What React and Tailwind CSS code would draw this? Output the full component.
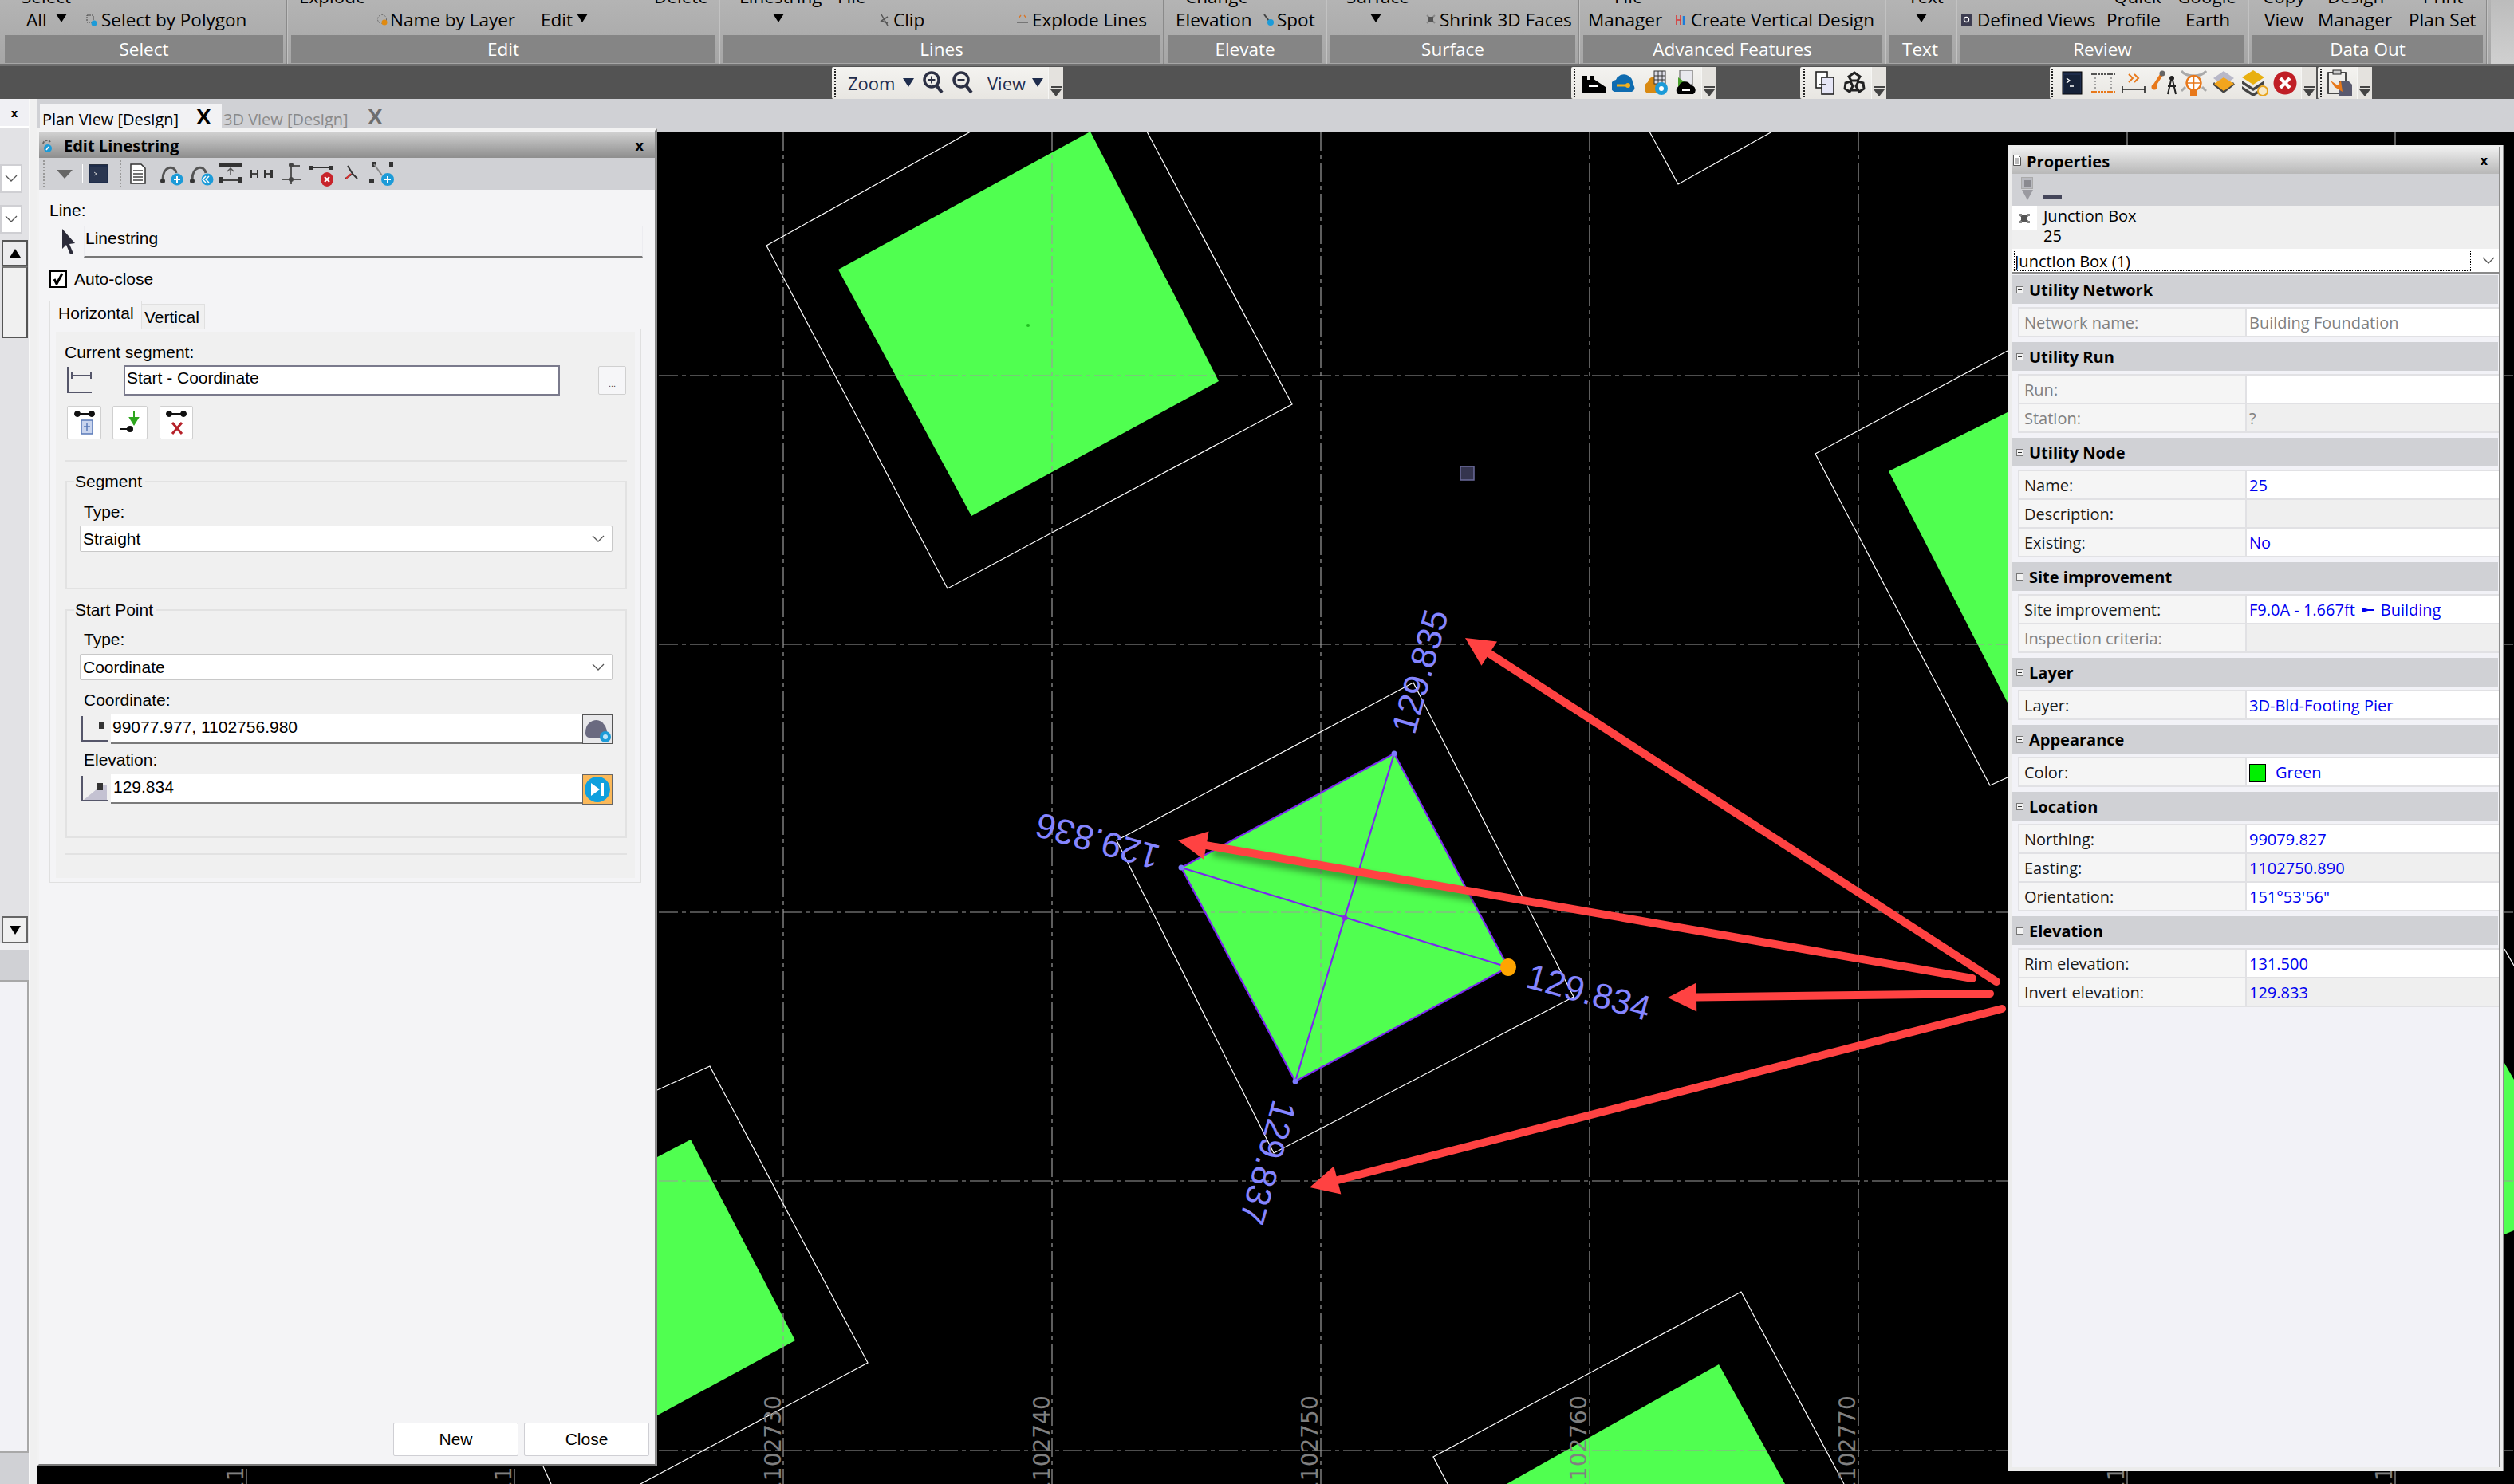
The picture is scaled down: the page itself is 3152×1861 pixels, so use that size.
import React from "react";

const Tri = ({ c = "#000", cls = "" }) => (
  <svg width="14" height="11" viewBox="0 0 14 11" className={"shrink-0 " + cls}><path d="M0 0h14L7 11z" fill={c} /></svg>
);
const Chev = ({ c = "#555" }) => (
  <svg width="16" height="10" viewBox="0 0 16 10" className="shrink-0"><path d="M1 1l7 7 7-7" stroke={c} strokeWidth="1.3" fill="none" /></svg>
);
const Ic = ({ w = 14, h = 16, children, cls = "" }) => (
  <svg width={w} height={h} viewBox={`0 0 ${w} ${h}`} className={"shrink-0 " + cls}>{children}</svg>
);
const Sep = () => (
  <div className="w-[10px] h-[80px] flex justify-center shrink-0"><div className="w-[2px] h-full bg-[#8a8a8a] border-r border-[#c2c2c2]" /></div>
);
const Strip = ({ label }) => (
  <div className="h-[35px] mt-[4px] mb-[1px] bg-[#858585] text-white flex items-center justify-center shrink-0">{label}</div>
);
const Row1 = ({ children }) => <div className="h-[18px] mb-[4px] flex items-end text-black whitespace-nowrap shrink-0 leading-none">{children}</div>;
const Row2 = ({ children }) => <div className="h-[28px] mb-[1px] flex items-center text-black whitespace-nowrap shrink-0">{children}</div>;

const Overflow = () => (
  <div className="w-[19px] h-full flex flex-col items-center justify-end pb-[3px] bg-[#e4e2de] border-l border-[#f6f6f4] shrink-0">
    <div className="w-[13px] h-[2px] bg-[#444] mb-[2px]" />
    <svg width="14" height="9" viewBox="0 0 14 9"><path d="M0 0h14L7 9z" fill="#444" /></svg>
  </div>
);
const Grip = ({ cls = "" }) => <div className={"w-[2px] h-[36px] border-l-2 border-dotted border-[#222] shrink-0 " + cls} />;

function Ribbon() {
  return (
    <div className="h-[80px] flex pl-[6px] bg-gradient-to-b from-[#b4b4b4] to-[#a6a6a6] text-[22.5px] leading-[28px] overflow-hidden shrink-0">
      <div className="w-[349px] h-[80px] flex flex-col justify-end overflow-hidden shrink-0">
        <Row1><span className="ml-[21px]">Select</span></Row1>
        <Row2>
          <span className="ml-[27px] w-[30px]">All</span>
          <Tri cls="ml-[7px] -mt-[6px]" />
          <Ic cls="ml-[24px]"><rect x="1" y="2" width="8" height="9" fill="none" stroke="#444" strokeDasharray="2 1" /><circle cx="10" cy="12" r="3.5" fill="#1c9bd8" /></Ic>
          <span className="ml-[5px] w-[188px]">Select by Polygon</span>
        </Row2>
        <Strip label="Select" />
      </div>
      <Sep />
      <div className="w-[532px] h-[80px] flex flex-col justify-end overflow-hidden shrink-0">
        <Row1><span className="ml-[10px] w-[80px]">Explode</span><span className="ml-[365px]">Delete</span></Row1>
        <Row2>
          <Ic cls="ml-[107px]"><circle cx="7" cy="7" r="5.5" fill="none" stroke="#666" strokeDasharray="2 1.5" /><circle cx="10" cy="11" r="3.5" fill="#e08a10" /></Ic>
          <span className="ml-[3px] w-[159px]">Name by Layer</span>
          <span className="ml-[30px] w-[40px]">Edit</span>
          <Tri cls="ml-[5px] -mt-[6px]" />
        </Row2>
        <Strip label="Edit" />
      </div>
      <Sep />
      <div className="w-[547px] h-[80px] flex flex-col justify-end overflow-hidden shrink-0">
        <Row1><span className="ml-[20px] w-[101px]">Linestring</span><span className="ml-[22px]">File</span></Row1>
        <Row2>
          <Tri cls="ml-[62px] -mt-[6px]" />
          <Ic cls="ml-[119px]"><path d="M3 1l8 14M11 4L3 9l8 3" stroke="#555" strokeWidth="1.5" fill="none" /></Ic>
          <span className="ml-[4px] w-[40px]">Clip</span>
          <Ic w={16} cls="ml-[114px]"><path d="M3 6l3-4M13 6l-3-4" stroke="#d9772a" strokeWidth="1.3" fill="none" /><path d="M1 11h14" stroke="#555" strokeWidth="1.3" /></Ic>
          <span className="ml-[4px] w-[144px]">Explode Lines</span>
        </Row2>
        <Strip label="Lines" />
      </div>
      <Sep />
      <div className="w-[194px] h-[80px] flex flex-col justify-end overflow-hidden shrink-0">
        <Row1><span className="ml-[22px]">Change</span></Row1>
        <Row2>
          <span className="ml-[10px] w-[95px]">Elevation</span>
          <Ic cls="ml-[14px]"><path d="M2 1l6 8" stroke="#444" strokeWidth="2" /><circle cx="10" cy="11" r="4" fill="#1c9bd8" /></Ic>
          <span className="ml-[4px] w-[49px]">Spot</span>
        </Row2>
        <Strip label="Elevate" />
      </div>
      <Sep />
      <div className="w-[307px] h-[80px] flex flex-col justify-end overflow-hidden shrink-0">
        <Row1><span className="ml-[20px]">Surface</span></Row1>
        <Row2>
          <Tri cls="ml-[50px] -mt-[6px]" />
          <Ic cls="ml-[55px]"><path d="M2 2l10 10M12 2L2 12" stroke="#888" strokeWidth="2" /><rect x="4" y="4" width="6" height="6" fill="#555" /></Ic>
          <span className="ml-[4px] w-[168px]">Shrink 3D Faces</span>
        </Row2>
        <Strip label="Surface" />
      </div>
      <Sep />
      <div className="w-[374px] h-[80px] flex flex-col justify-end overflow-hidden shrink-0">
        <Row1><span className="ml-[39px]">File</span></Row1>
        <Row2>
          <span className="ml-[6px] w-[95px]">Manager</span>
          <Ic w={16} cls="ml-[14px]"><path d="M2 2v12M7 2v12M2 8h5" stroke="#d33" strokeWidth="1.6" /><path d="M11 3v11" stroke="#1c7bd8" strokeWidth="2.5" /></Ic>
          <span className="ml-[4px] w-[234px]">Create Vertical Design</span>
        </Row2>
        <Strip label="Advanced Features" />
      </div>
      <Sep />
      <div className="w-[79px] h-[80px] flex flex-col justify-end overflow-hidden shrink-0">
        <Row1><span className="ml-[23px]">Text</span></Row1>
        <Row2><Tri cls="ml-[33px] -mt-[6px]" /></Row2>
        <div className="-ml-[2px]"><Strip label="Text" /></div>
      </div>
      <Sep />
      <div className="w-[356px] h-[80px] flex flex-col justify-end overflow-hidden shrink-0">
        <Row1><span className="ml-[192px] w-[57px]">Quick</span><span className="ml-[23px]">Google</span></Row1>
        <Row2>
          <Ic cls="ml-[1px]"><rect width="13" height="15" fill="#3c3c50" /><circle cx="6.5" cy="7.5" r="3" fill="none" stroke="#fff" strokeWidth="1.4" /></Ic>
          <span className="ml-[6px] w-[150px]">Defined Views</span>
          <span className="ml-[12px] w-[66px]">Profile</span>
          <span className="ml-[33px]">Earth</span>
        </Row2>
        <Strip label="Review" />
      </div>
      <Sep />
      <div className="w-[289px] h-[80px] flex flex-col justify-end overflow-hidden shrink-0">
        <Row1><span className="ml-[13px] w-[47px]">Copy</span><span className="ml-[34px] w-[70px]">Design</span><span className="ml-[50px]">Print</span></Row1>
        <Row2>
          <span className="ml-[15px] w-[50px]">View</span>
          <span className="ml-[17px] w-[94px]">Manager</span>
          <span className="ml-[20px]">Plan Set</span>
        </Row2>
        <Strip label="Data Out" />
      </div>
      <Sep />
      <div className="flex-1 h-[80px] bg-gradient-to-b from-[#bcbcbc] to-[#d0d0d0]" />
    </div>
  );
}

const TB = ({ cls, children }) => (
  <div className={"h-[40px] mt-[1px] flex items-center bg-gradient-to-b from-[#f4f3f0] to-[#e8e6e2] rounded-[2px] shrink-0 " + cls}>{children}</div>
);

function Toolbars() {
  return (
    <div className="h-[44px] flex bg-[#535353] border-t-[3px] border-[#6f6f6f] shrink-0">
      <TB cls="ml-[1043px] w-[290px] text-[22px] text-[#1f2d4d]">
        <Grip cls="ml-[3px]" />
        <span className="ml-[15px] w-[63px]">Zoom</span>
        <Tri c="#1f2d4d" cls="ml-[6px] -mt-[2px]" />
        <svg width="26" height="30" viewBox="0 0 26 30" className="ml-[11px]"><circle cx="11" cy="11" r="9" fill="none" stroke="#2c3044" strokeWidth="3.5" /><path d="M17 18l7 9" stroke="#2c3044" strokeWidth="4" /><path d="M6.5 11h9M11 6.500v9" stroke="#2c3044" strokeWidth="2" /></svg>
        <svg width="26" height="30" viewBox="0 0 26 30" className="ml-[11px]"><circle cx="11" cy="11" r="9" fill="none" stroke="#2c3044" strokeWidth="3.5" /><path d="M17 18l7 9" stroke="#2c3044" strokeWidth="4" /><path d="M6.5 11h9" stroke="#2c3044" strokeWidth="2" /></svg>
        <span className="ml-[18px] w-[52px]">View</span>
        <Tri c="#1f2d4d" cls="ml-[4px] -mt-[2px]" />
        <div className="ml-auto h-full"><Overflow /></div>
      </TB>
      <TB cls="ml-[637px] w-[182px]">
        <Grip cls="ml-[3px]" />
        <svg width="32" height="30" viewBox="0 0 32 30" className="ml-[8px]"><path d="M1 6h6v5h3V6h5v4l15 10v8H1z" fill="#000" /><path d="M9 19h12" stroke="#fff" strokeWidth="2" /></svg>
        <svg width="30" height="30" viewBox="0 0 30 30" className="ml-[6px]"><path d="M3 26a8 8 0 0 1 2-15 11 11 0 0 1 21 6 5 5 0 0 1-1 9z" fill="#0f6cb0" /><path d="M6 18h14" stroke="#f2b01e" strokeWidth="3" /><circle cx="20" cy="18" r="3" fill="#f2b01e" /></svg>
        <svg width="30" height="32" viewBox="0 0 30 32" className="ml-[12px]"><path d="M1 28a8 8 0 0 1 2-13 8 8 0 0 1 13-5l5 18z" fill="#d98a12" /><rect x="11" y="1" width="14" height="16" fill="#dcdce6" stroke="#333" /><path d="M11 7h14M11 12h14M16 1v16M21 1v16" stroke="#333" /><circle cx="20" cy="23" r="8" fill="#1c9bd8" /><circle cx="20" cy="23" r="3" fill="#fff" /></svg>
        <svg width="28" height="32" viewBox="0 0 28 32" className="ml-[8px]"><rect x="5" y="0" width="16" height="18" fill="#e8e8ee" stroke="#555" /><path d="M3 9l10 7-10 7z" fill="#4aa02c" /><path d="M3 30a6 6 0 0 1 1-10 8 8 0 0 1 15-1 6 6 0 0 1 3 11z" fill="#000" /><path d="M8 25h10" stroke="#fff" strokeWidth="2" /></svg>
        <div className="ml-auto h-full"><Overflow /></div>
      </TB>
      <TB cls="ml-[105px] w-[108px]">
        <Grip cls="ml-[4px]" />
        <svg width="26" height="30" viewBox="0 0 26 30" className="ml-[12px]"><rect x="2" y="1" width="14" height="20" fill="#fff" stroke="#222" strokeWidth="1.6" /><rect x="9" y="8" width="15" height="21" fill="#e6e6f6" stroke="#222" strokeWidth="1.6" /><path d="M6 17h9" stroke="#222" strokeWidth="1.6" /></svg>
        <svg width="28" height="30" viewBox="0 0 28 30" className="ml-[10px]"><path d="M14 2l7 5-3 5h-8L7 7zM3 15l6-2 3 6-4 7-6-4zM25 15l-6-2-3 6 4 7 6-4zM10 24h8" fill="none" stroke="#222" strokeWidth="3" /></svg>
        <div className="ml-auto h-full"><Overflow /></div>
      </TB>
      <TB cls="ml-[205px] w-[334px]">
        <Grip cls="ml-[2px]" />
        <svg width="26" height="30" viewBox="0 0 26 30" className="ml-[11px]"><rect x="1" y="1" width="24" height="28" fill="#1e2c4a" stroke="#000" /><rect x="3" y="5" width="20" height="22" fill="#162238" /><path d="M6 9l4 3-4 3M10 19h5" stroke="#fff" strokeWidth="1.4" fill="none" /></svg>
        <svg width="32" height="30" viewBox="0 0 32 30" className="ml-[10px]"><path d="M1 4h30" stroke="#222" strokeWidth="1.6" strokeDasharray="3 1" /><path d="M1 26h30" stroke="#e8781a" strokeWidth="2" strokeDasharray="3 1" /><path d="M6 8v14M26 8v14" stroke="#888" strokeWidth="1.5" strokeDasharray="2 2" /></svg>
        <svg width="30" height="30" viewBox="0 0 30 30" className="ml-[7px]"><path d="M9 4l5 5-5 5M16 4l5 5-5 5" stroke="#e8781a" strokeWidth="2" fill="none" /><path d="M1 23h28M1 19v8M29 19v8" stroke="#222" strokeWidth="1.6" /></svg>
        <svg width="34" height="32" viewBox="0 0 34 32" className="ml-[7px]"><path d="M3 21L14 4" stroke="#e8781a" strokeWidth="4" /><circle cx="14" cy="4" r="3.5" fill="#666" /><circle cx="4" cy="21" r="3.5" fill="#e8781a" /><path d="M26 8l-5 22M26 8l5 22M21 20h10" stroke="#222" strokeWidth="2" fill="none" /><circle cx="26" cy="10" r="3" fill="#222" /></svg>
        <svg width="33" height="32" viewBox="0 0 33 32" className="ml-[3px]"><path d="M1 1c6 8 25 8 31 0M1 26l5-5M32 26l-5-5" stroke="#aaa" strokeWidth="3" fill="none" /><circle cx="16.500" cy="16" r="9" fill="#fff" stroke="#e8781a" strokeWidth="2.5" /><path d="M16.500 7v18M8 16h17" stroke="#e8781a" strokeWidth="1.6" /><rect x="12" y="25" width="9" height="7" fill="#e8781a" /></svg>
        <svg width="31" height="32" viewBox="0 0 31 32" className="ml-[6px]"><path d="M15 1l13 9-13 9L2 10z" fill="#b8b8c8" /><path d="M3 15l12 9 12-9 2 3-14 11L1 18z" fill="#444" /><path d="M15 9l13 8-13 9L3 17z" fill="#f2a51e" /></svg>
        <svg width="33" height="34" viewBox="0 0 33 34" className="ml-[6px]"><path d="M15 1l14 9-14 9L1 10z" fill="#e8b010" /><path d="M1 14l14 9 14-9v4l-14 9-14-9zM1 21l14 9 10-6v4l-10 6-14-9z" fill="#444" /><circle cx="27" cy="27" r="6" fill="#f7e9c8" stroke="#e8a51e" strokeWidth="2" /></svg>
        <svg width="30" height="30" viewBox="0 0 30 30" className="ml-[7px]"><circle cx="15" cy="15" r="14.500" fill="#c01f26" /><path d="M9 9l12 12M21 9L9 21" stroke="#fff" strokeWidth="4.500" /></svg>
        <div className="ml-auto h-full"><Overflow /></div>
      </TB>
      <TB cls="ml-[2px] w-[68px]">
        <Grip cls="ml-[3px]" />
        <svg width="32" height="34" viewBox="0 0 32 34" className="ml-[7px]"><rect x="1" y="4" width="22" height="26" fill="none" stroke="#222" strokeWidth="1.6" /><rect x="7" y="1" width="10" height="5" fill="#ccc" stroke="#222" /><path d="M15 14h11l5 5v14H15z" fill="#5a5a6e" /><path d="M4 14l9 6 4-6 2 14-10-6z" fill="#e8781a" /></svg>
        <div className="ml-auto h-full"><Overflow /></div>
      </TB>
    </div>
  );
}

const Grip2 = ({ cls = "" }) => <div className={"w-[2px] h-[34px] border-l-2 border-dotted border-[#999] shrink-0 " + cls} />;
const Dumb = () => (
  <g fill="#111" stroke="#111"><circle cx="4" cy="5" r="3.500" /><circle cx="22" cy="5" r="3.500" /><path d="M4 5h18" strokeWidth="2" /></g>
);

function EditPanel() {
  return (
    <div className="absolute left-0 -top-[4px] bottom-[22px] w-[778px] flex flex-col bg-[#f4f4f6] border-[3px] border-b-[3px] border-[#f2f2f2] border-b-[#7a7a7a] border-r-[#8a8a8a] font-['Liberation_Sans',sans-serif] text-[21px] leading-[22px] text-black">
      <div className="h-[32px] mt-[2px] flex items-center bg-gradient-to-b from-[#d0d0d0] to-[#8e8e8e] shrink-0 font-['Open_Sans',sans-serif]">
        <svg width="16" height="18" viewBox="0 0 16 18" className="ml-[1px]"><path d="M4 7a5 5 0 0 1 9-2" stroke="#666" strokeWidth="2" fill="none" strokeDasharray="3 1.500" /><circle cx="10" cy="13" r="5" fill="#1c9bd8" /><path d="M8 15l3-4" stroke="#fff" strokeWidth="1.500" /></svg>
        <span className="ml-[14px] pt-[2px] font-bold text-[20px] w-[300px]">Edit Linestring</span>
        <span className="ml-auto mr-[14px] font-bold text-[18px] leading-none">x</span>
      </div>
      <div className="h-[40px] flex items-center bg-[#d0d1d5] shrink-0">
        <Grip2 cls="ml-[5px]" />
        <svg width="20" height="11" viewBox="0 0 20 11" className="ml-[15px]"><path d="M0 0h20L10 11z" fill="#666" /></svg>
        <div className="ml-[12px] w-[1px] h-[24px] bg-white" />
        <svg width="25" height="24" viewBox="0 0 25 24" className="ml-[7px]"><rect width="25" height="24" fill="#1e2c4a" stroke="#333" /><rect x="2" y="4" width="21" height="18" fill="#2a3650" /><path d="M7 10l3 2-3 2" stroke="#ccc" fill="none" /></svg>
        <Grip2 cls="ml-[14px]" />
        <svg width="20" height="26" viewBox="0 0 20 26" className="ml-[11px]"><path d="M1 1h13l5 5v19H1z" fill="#fff" stroke="#333" strokeWidth="1.500" /><path d="M4 9h12M4 13h12M4 17h12M4 21h12" stroke="#444" strokeWidth="1.500" /></svg>
        <svg width="28" height="30" viewBox="0 0 28 30" className="ml-[18px]"><path d="M3 22C3 5 18 3 20 14" stroke="#555" strokeWidth="3" fill="none" /><circle cx="3" cy="24" r="3" fill="#333" /><circle cx="21" cy="22" r="7.500" fill="#1c9bd8" /><path d="M21 18v8M17 22h8" stroke="#fff" strokeWidth="2" /></svg>
        <svg width="30" height="30" viewBox="0 0 30 30" className="ml-[9px]"><path d="M3 22C3 5 18 3 20 14" stroke="#555" strokeWidth="3" fill="none" /><circle cx="3" cy="24" r="3" fill="#333" /><circle cx="22" cy="22" r="7.500" fill="#1c9bd8" /><path d="M24 18l-4 4 4 4M20 18l-4 4 4 4" stroke="#fff" strokeWidth="1.500" fill="none" /></svg>
        <svg width="28" height="26" viewBox="0 0 28 26" className="ml-[7px]"><path d="M0 2h28" stroke="#333" strokeWidth="4" /><path d="M14 6v9M10 10l4-4 4 4" stroke="#555" strokeWidth="1.500" fill="none" /><path d="M2 21h24" stroke="#444" strokeWidth="2" /><rect y="17" width="5" height="8" fill="#333" /><rect x="23" y="17" width="5" height="8" fill="#333" /></svg>
        <svg width="29" height="12" viewBox="0 0 29 12" className="ml-[10px]"><path d="M0 6h10M19 6h10" stroke="#444" strokeWidth="2" /><rect x="0" y="1" width="3" height="10" fill="#333" /><rect x="9" y="1" width="2" height="10" fill="#333" /><rect x="18" y="1" width="2" height="10" fill="#333" /><rect x="26" y="1" width="3" height="10" fill="#333" /></svg>
        <svg width="26" height="30" viewBox="0 0 26 30" className="ml-[10px]"><path d="M13 2v26M1 22h25M14 5h10" stroke="#555" strokeWidth="2" /><circle cx="13" cy="4" r="3" fill="#444" /><circle cx="13" cy="22" r="3" fill="#444" /></svg>
        <svg width="31" height="32" viewBox="0 0 31 32" className="ml-[9px]"><path d="M2 8h28" stroke="#333" strokeWidth="2" /><rect x="0" y="6" width="5" height="5" fill="#333" /><rect x="25" y="6" width="5" height="5" fill="#333" /><ellipse cx="23" cy="23" rx="8" ry="9" fill="#c8242b" /><path d="M20 20l6 6M26 20l-6 6" stroke="#fff" strokeWidth="2" /></svg>
        <svg width="19" height="22" viewBox="0 0 19 22" className="ml-[12px]"><path d="M6 1l6 10 6 6M3 17l9-6" stroke="#333" strokeWidth="2" fill="none" /><path d="M4 17l6-6" stroke="#d33" strokeWidth="2" /></svg>
        <svg width="31" height="32" viewBox="0 0 31 32" className="ml-[14px]"><rect x="3" y="1" width="6" height="6" fill="#333" /><rect x="25" y="1" width="5" height="6" fill="#333" /><rect x="0" y="22" width="6" height="6" fill="#333" /><path d="M6 4l10 14" stroke="#888" strokeWidth="2" /><circle cx="23" cy="23" r="8" fill="#1c9bd8" /><path d="M23 19v8M19 23h8" stroke="#fff" strokeWidth="2" /></svg>
      </div>
      <div className="flex-1 flex flex-col pl-[13px] min-h-0">
        <div className="h-[22px] mt-[15px]">Line:</div>
        <div className="flex mt-[8px] h-[40px]">
          <svg width="17" height="32" viewBox="0 0 17 32" className="ml-[15px] mt-[4px]"><path d="M1 0l16 18-7 1 5 12-4 1-5-12-5 5z" fill="#2c2c3a" /></svg>
          <div className="ml-[11px] w-[701px] h-[40px] pl-[1px] pt-[4px] border border-[#ececf0] border-b-2 border-b-[#777]">Linestring</div>
        </div>
        <div className="flex items-center mt-[16px] h-[22px]">
          <div className="w-[22px] h-[22px] border-2 border-black bg-white flex items-center justify-center">
            <svg width="14" height="16" viewBox="0 0 14 16"><path d="M2 8l3 6 7-13" stroke="#000" strokeWidth="3" fill="none" /></svg>
          </div>
          <span className="ml-[9px]">Auto-close</span>
        </div>
        <div className="flex items-end mt-[16px] h-[35px]">
          <div className="w-[116px] h-[35px] pl-[10px] pt-[4px] bg-[#f4f4f6] border border-b-0 border-[#e0e0e0]">Horizontal</div>
          <div className="w-[79px] h-[31px] pl-[3px] pt-[5px] bg-[#f0f0f0] border border-l-0 border-b-0 border-[#e0e0e0]">Vertical</div>
        </div>
        <div className="w-[742px] h-[695px] px-[7px] pt-[3px] pb-[5px] border border-[#e0e0e0] flex">
          <div className="w-[728px] h-full bg-[#f0f0f0]">
            <div className="h-[22px] mt-[15px] pl-[11px] pt-[0px]">Current segment:</div>
            <div className="flex mt-[5px] h-[38px]">
              <svg width="32" height="34" viewBox="0 0 32 34" className="ml-[14px] mt-[2px]"><path d="M1 0v32h30" stroke="#55566a" strokeWidth="2" fill="none" /><path d="M6 11h24M6 7v8M30 7v8" stroke="#55566a" strokeWidth="2" /></svg>
              <div className="ml-[39px] w-[547px] h-[38px] bg-white border-2 border-[#7a7a8c] pl-[2px] pt-[3px]">Start - Coordinate</div>
              <div className="ml-[48px] w-[35px] h-[36px] mt-[1px] bg-[#f6f6f8] border border-[#d0d0d0] rounded-[2px] flex items-center justify-center text-[11px] pt-[8px] text-[#444]">...</div>
            </div>
            <div className="flex mt-[13px] h-[42px]">
              <div className="ml-[14px] w-[43px] h-[42px] bg-white border border-[#d0d0d0] rounded-[2px] flex items-center justify-center">
                <svg width="26" height="32" viewBox="0 0 26 32" className=""><Dumb /><rect x="9" y="13" width="14" height="17" fill="#c8d4ee" stroke="#5a7ab8" strokeWidth="1.500" /><path d="M16 16v10M12 21h8" stroke="#5a7ab8" strokeWidth="1.500" /></svg>
              </div>
              <div className="ml-[14px] w-[44px] h-[42px] bg-white border border-[#d0d0d0] rounded-[2px] flex items-center justify-center">
                <svg width="26" height="32" viewBox="0 0 26 32"><path d="M1 24h12" stroke="#111" strokeWidth="2" /><circle cx="13" cy="24" r="4" fill="#111" /><path d="M18 2v10M13 10h10l-5 8z" fill="#2ea61e" stroke="#2ea61e" strokeWidth="2" /></svg>
              </div>
              <div className="ml-[15px] w-[42px] h-[42px] bg-white border border-[#d0d0d0] rounded-[2px] flex items-center justify-center">
                <svg width="26" height="32" viewBox="0 0 26 32"><Dumb /><path d="M8 16l12 14M20 16L8 30" stroke="#b6222a" strokeWidth="3" /></svg>
              </div>
            </div>
            <div className="ml-[12px] mt-[26px] w-[704px] h-[2px] bg-[#e2e2e2]" />
            <div className="relative ml-[12px] mt-[24px] w-[704px] h-[136px] border-2 border-[#e2e2e2] flex flex-col">
              <span className="absolute left-[9px] -top-[12px] bg-[#f0f0f0] pr-[4px] pl-[1px]">Segment</span>
              <div className="h-[22px] mt-[26px] pl-[21px]">Type:</div>
              <div className="ml-[16px] mt-[6px] w-[668px] h-[33px] bg-white border border-[#c8c8c8] rounded-[2px] flex items-center pl-[3px] pr-[9px] justify-between">Straight<Chev /></div>
            </div>
            <div className="relative ml-[12px] mt-[25px] w-[704px] h-[287px] border-2 border-[#e2e2e2] flex flex-col">
              <span className="absolute left-[9px] -top-[12px] bg-[#f0f0f0] pr-[4px] pl-[1px]">Start Point</span>
              <div className="h-[22px] mt-[25px] pl-[21px]">Type:</div>
              <div className="ml-[16px] mt-[7px] w-[668px] h-[33px] bg-white border border-[#c8c8c8] rounded-[2px] flex items-center pl-[3px] pr-[9px] justify-between">Coordinate<Chev /></div>
              <div className="h-[22px] mt-[14px] pl-[21px]">Coordinate:</div>
              <div className="flex mt-[7px] ml-[18px] h-[37px]">
                <svg width="33" height="34" viewBox="0 0 33 34" className=""><path d="M1 2v31h32" stroke="#55566a" strokeWidth="2" fill="none" /><rect x="22" y="9" width="6" height="9" fill="#333" /></svg>
                <div className="ml-[4px] w-[591px] h-[37px] bg-white border-b-2 border-[#7a7a7a] pl-[2px] pt-[5px]">99077.977, 1102756.980</div>
                <div className="w-[38px] h-[37px] bg-[#e8e8ea] border border-[#555]">
                  <svg width="36" height="35" viewBox="0 0 36 35"><path d="M3 22c0-11 7-16 14-16s14 9 13 18c-1 4-5 4-9 4H9c-4 0-6-2-6-6z" fill="#6a6a80" /><circle cx="28" cy="27" r="7" fill="#1c9bd8" /><circle cx="28" cy="27" r="3" fill="#bfe4f7" /></svg>
                </div>
              </div>
              <div className="h-[22px] mt-[9px] pl-[21px]">Elevation:</div>
              <div className="flex mt-[7px] ml-[18px] h-[38px]">
                <svg width="33" height="34" viewBox="0 0 33 34" className=""><path d="M1 2v31h32" stroke="#55566a" strokeWidth="2" fill="none" /><path d="M3 32l22-18h7v18z" fill="#c4c2d2" /><rect x="20" y="11" width="7" height="9" fill="#333" /></svg>
                <div className="ml-[4px] w-[591px] h-[37px] bg-white border-b-2 border-[#7a7a7a] pl-[3px] pt-[5px]">129.834</div>
                <div className="w-[38px] h-[38px] bg-[#fbb95a] border border-[#666]">
                  <svg width="36" height="36" viewBox="0 0 36 36"><circle cx="18" cy="18" r="16" fill="#0fa0de" /><path d="M10 10l11 8-11 8z" fill="#fff" /><path d="M24 10v16" stroke="#fff" strokeWidth="4" /></svg>
                </div>
              </div>
            </div>
            <div className="ml-[12px] mt-[19px] w-[704px] h-[2px] bg-[#e2e2e2]" />
          </div>
        </div>
        <div className="mt-auto mb-[10px] flex justify-end gap-[7px] pr-[7px]">
          <div className="w-[157px] h-[42px] bg-white border border-[#cfcfd4] rounded-[2px] flex items-center justify-center">New</div>
          <div className="w-[157px] h-[42px] bg-white border border-[#cfcfd4] rounded-[2px] flex items-center justify-center">Close</div>
        </div>
      </div>
    </div>
  );
}

const Head = ({ children }) => (
  <div className="h-[36px] mx-[1px] flex items-center bg-[#d0d1d5] font-bold text-black">
    <div className="ml-[5px] w-[9px] h-[9px] border border-[#777] bg-[#f2f2f2] flex items-center justify-center shrink-0"><div className="w-[5px] h-[1px] bg-[#333]" /></div>
    <span className="ml-[7px] pt-[1px]">{children}</span>
  </div>
);
const Row = ({ label, dis, alt, children }) => (
  <div className="h-[36px] flex border-b-2 border-[#e1e1e4]">
    <div className={"w-[285px] h-full flex items-center pl-[6px] pt-[2px] bg-[#f5f5f5] border-r-2 border-[#e1e1e4] " + (dis ? "text-[#808080]" : "text-[#1a1a1a]")}>{label}</div>
    <div className={"flex-1 h-full flex items-center pl-[3px] pt-[2px] " + (alt ? "bg-[#efefef] " : "bg-white ") + (dis ? "text-[#808080]" : "text-[#0000f0]")}>{children}</div>
  </div>
);
const Rows = ({ children }) => (
  <div className="mt-[4px] mb-[6px] ml-[8px] border-t-2 border-l-2 border-[#e1e1e4] flex flex-col">{children}</div>
);

function PropsPanel() {
  return (
    <div className="absolute left-[2471px] top-[17px] w-[623px] h-[1663px] flex bg-[#ececec] border-r-2 border-[#8e8e8e] pl-[5px] pr-[3px] pt-[2px] pb-[5px]">
      <div className="flex-1 min-w-0 flex flex-col bg-[#f2f2f7] border-r-2 border-[#8e8e8e] font-['Open_Sans',sans-serif] text-[20px] leading-[24px] text-black">
        <div className="h-[34px] flex items-center bg-gradient-to-b from-[#f0f0f0] to-[#b8b8b8] shrink-0">
          <svg width="10" height="14" viewBox="0 0 10 14" className="ml-[2px]"><path d="M.5.500h6l3 3v10H.5z" fill="#fff" stroke="#555" /><path d="M2 5h6M2 7h6M2 9h6M2 11h6" stroke="#777" /></svg>
          <span className="ml-[7px] pt-[3px] font-bold">Properties</span>
          <span className="ml-auto mr-[14px] font-bold text-[16px] leading-none">x</span>
        </div>
        <div className="h-[40px] flex bg-[#d0d1d5] shrink-0">
          <div className="ml-[12px] mt-[4px] flex flex-col items-center">
            <div className="w-[15px] h-[15px] bg-[#b9bac0] border border-[#aaa] flex items-center justify-center"><div className="w-[8px] h-[8px] bg-[#8a8a90]" /></div>
            <svg width="14" height="13" viewBox="0 0 14 13" className="mt-[1px]"><path d="M0 0h14L7 13z" fill="#9a9aa0" /></svg>
          </div>
          <div className="ml-[12px] mt-[27px] w-[24px] h-[4px] bg-[#44465a]" />
        </div>
        <div className="h-[54px] bg-[#efefef] flex shrink-0">
          <div className="w-[32px] h-[31px] bg-white flex items-center justify-center">
            <svg width="14" height="12" viewBox="0 0 14 12"><path d="M2 2l10 8M12 2L2 10" stroke="#666" strokeWidth="2" /><rect x="3" y="2" width="8" height="8" fill="#555" /><rect x="0" y="0" width="4" height="3" fill="#888" /><rect x="10" y="0" width="4" height="3" fill="#888" /><rect x="0" y="9" width="4" height="3" fill="#888" /><rect x="10" y="9" width="4" height="3" fill="#888" /></svg>
          </div>
          <div className="ml-[8px] flex flex-col leading-[25px]"><span>Junction Box</span><span>25</span></div>
        </div>
        <div className="h-[31px] bg-white flex items-center shrink-0 border-b-2 border-[#8a8a8a]">
          <div className="ml-[3px] w-[573px] h-[27px] border border-dotted border-black flex items-center text-[20px] pt-[2px]">Junction Box (1)</div>
          <div className="ml-[14px]"><Chev /></div>
        </div>
        <div className="flex flex-col pt-[2px]">
          <Head>Utility Network</Head>
          <Rows><Row dis label="Network name:">Building Foundation</Row></Rows>
          <Head>Utility Run</Head>
          <Rows><Row dis label="Run:"></Row><Row dis alt label="Station:">?</Row></Rows>
          <Head>Utility Node</Head>
          <Rows><Row label="Name:">25</Row><Row alt label="Description:"></Row><Row label="Existing:">No</Row></Rows>
          <Head>Site improvement</Head>
          <Rows>
            <Row label="Site improvement:"><span className="flex items-center">F9.0A - 1.667ft<svg width="16" height="8" viewBox="0 0 16 8" className="mx-[8px]"><path d="M0 1l8 2h7v2H8l-8 2z" fill="#0000f0" /></svg>Building</span></Row>
            <Row dis alt label="Inspection criteria:"></Row>
          </Rows>
          <Head>Layer</Head>
          <Rows><Row label="Layer:">3D-Bld-Footing Pier</Row></Rows>
          <Head>Appearance</Head>
          <Rows><Row label="Color:"><span className="flex items-center"><span className="w-[21px] h-[23px] bg-[#00f000] border border-black mr-[12px]" />Green</span></Row></Rows>
          <Head>Location</Head>
          <Rows><Row label="Northing:">99079.827</Row><Row alt label="Easting:">1102750.890</Row><Row label="Orientation:">151°53'56"</Row></Rows>
          <Head>Elevation</Head>
          <Rows><Row label="Rim elevation:">131.500</Row><Row alt label="Invert elevation:">129.833</Row></Rows>
        </div>
      </div>
    </div>
  );
}

const Arrow = ({ x1, y1, x2, y2, w = 10, L = 36, H = 18 }) => {
  const a = Math.atan2(y2 - y1, x2 - x1), c = Math.cos(a), s = Math.sin(a);
  const bx = x2 - L * c, by = y2 - L * s;
  const pts = `${x2},${y2} ${bx - H * s},${by + H * c} ${bx + H * s},${by - H * c}`;
  return (<g><line x1={x1} y1={y1} x2={bx} y2={by} stroke="#ff4242" strokeWidth={w} strokeLinecap="round" /><polygon points={pts} fill="#ff4242" /></g>);
};

function Drawing() {
  const G = "#50ff50", W = "#ffffff";
  const lab = "font-['Liberation_Sans',sans-serif]";
  return (
    <svg width="3106" height="1696" viewBox="46 165 3106 1696" className="absolute left-0 top-0">
      <defs><filter id="b" x="-5%" y="-50%" width="110%" height="200%"><feGaussianBlur stdDeviation="4" /></filter></defs>
      <g fill={G}>
        <polygon points="1367,165 1528,478 1218,647 1051,338" />
        <polygon points="2517,517 2368,591 2517,881" />
        <polygon points="824,1451 866,1429 997,1681 824,1775" />
        <polygon points="1889,1861 2155,1711 2238,1861" />
        <polygon points="3140,1333 3152,1354 3152,1543 3140,1548" />
        <polygon points="1748,945 1891,1213 1624,1356 1481,1088" />
      </g>
      <g stroke="#9c9c9c" strokeWidth="1.2" strokeDasharray="24 5 5 5">
        {[309, 645, 982, 1319, 1656, 1993, 2330, 2667, 3003].map((x) => <line key={x} x1={x} y1="165" x2={x} y2="1861" />)}
        {[471, 808, 1144, 1481, 1819].map((y) => <line key={y} x1="46" y1={y} x2="3152" y2={y} />)}
      </g>
      <g fill="none" stroke={W} strokeWidth="1.2">
        <polyline points="1217,165 961,308 1188,738 1620,507 1438,165" />
        <polyline points="2068,165 2104,231 2222,165" />
        <polyline points="2517,440 2276,569 2495,985 2517,975" />
        <polyline points="824,1367 890,1337 1088,1709 803,1861" />
        <polyline points="681,1839 691,1861" />
        <polyline points="1815,1861 1797,1827 2183,1620 2312,1861" />
        <polyline points="3140,1190 3152,1211" />
        <polygon points="1772,856 1973,1250 1597,1446 1400,1054" />
      </g>
      <g fill="none" stroke="#7a28f0" strokeWidth="2.2">
        <polygon points="1748,945 1891,1213 1624,1356 1481,1088" />
        <line x1="1481" y1="1088" x2="1891" y2="1213" />
        <line x1="1748" y1="945" x2="1624" y2="1356" />
      </g>
      <g fill="#7b7bff"><circle cx="1748" cy="945" r="3.500" /><circle cx="1481" cy="1088" r="3.500" /><circle cx="1624" cy="1356" r="3.500" /></g>
      <circle cx="1686" cy="1151" r="3.500" fill="#8a2be2" />
      <ellipse cx="1891" cy="1213" rx="10" ry="11" fill="#ffa500" />
      <circle cx="1289" cy="408" r="2" fill="#20c020" />
      <rect x="1831" y="585" width="17" height="17" fill="#34344e" stroke="#6a6a9a" strokeWidth="1.500" />
      <g fill="#8585ff" fontSize="44" textAnchor="middle" dominantBaseline="central" className={lab}>
        <text transform="translate(1780 842) rotate(-74.4)">129.835</text>
        <text transform="translate(1992 1244) rotate(15.6)">129.834</text>
        <text transform="translate(1376 1055) rotate(195.6)">129.836</text>
        <text transform="translate(1590 1458) rotate(105.6)">129.837</text>
      </g>
      <g fill="#808080" fontSize="28" className="font-['DejaVu_Sans',sans-serif]">
        {[[979, "1102730"], [1316, "1102740"], [1652, "1102750"], [1989, "1102760"], [2326, "1102770"], [305, "1102710"], [641, "1102720"], [2663, "1102780"], [2999, "1102790"]].map(([x, t]) => (
          <text key={t} transform={`translate(${x} 1875) rotate(-90)`}>{t}</text>
        ))}
      </g>
      <line x1="2100" y1="1168" x2="1520" y2="1068" stroke="#000" strokeOpacity="0.4" strokeWidth="10" filter="url(#b)" />
      <Arrow x1={2503} y1={1231} x2={1837} y2={800} />
      <Arrow x1={2473} y1={1227} x2={1477} y2={1054} />
      <Arrow x1={2495} y1={1246} x2={2091} y2={1251} />
      <Arrow x1={2510} y1={1265} x2={1642} y2={1489} />
    </svg>
  );
}

export default function App() {
  return (
    <div className="w-[3152px] h-[1861px] flex flex-col overflow-hidden bg-[#d0d1d5] font-['Open_Sans',sans-serif]">
      <Ribbon />
      <Toolbars />
      <div className="flex-1 flex min-h-0">
        <div className="w-[36px] flex flex-col bg-[#e2e2e5] shrink-0">
          <div className="h-[36px] bg-[#f0f0f4] flex items-center justify-center font-bold text-[14px] text-black border-b-2 border-white shrink-0">x</div>
          <div className="h-[46px] shrink-0" />
          <div className="h-[36px] w-[28px] bg-white border-2 border-[#cfcfd3] flex items-center justify-center shrink-0"><Chev /></div>
          <div className="h-[15px] shrink-0" />
          <div className="h-[36px] w-[28px] bg-white border-2 border-[#cfcfd3] flex items-center justify-center shrink-0"><Chev /></div>
          <div className="h-[8px] shrink-0" />
          <div className="ml-[2px] mr-[1px] h-[33px] bg-[#ececee] border-2 border-[#555] flex items-center justify-center shrink-0"><Tri cls="rotate-180" /></div>
          <div className="ml-[2px] mr-[1px] h-[90px] bg-[#f0f0f0] border-2 border-[#555] border-t-[#777] shrink-0" />
          <div className="h-[725px] shrink-0" />
          <div className="ml-[2px] mr-[1px] h-[34px] bg-[#f0f0f0] border-2 border-[#666] flex items-center justify-center shrink-0"><Tri /></div>
          <div className="h-[8px] bg-[#f0f0f2] shrink-0" />
          <div className="h-[38px] bg-[#d0d1d5] shrink-0" />
          <div className="flex-1 bg-[#f2f2f6] border-t-2 border-r-2 border-b-2 border-[#a8a8a8]" />
          <div className="h-[39px] bg-[#d0d1d5] shrink-0" />
        </div>
        <div className="w-[10px] bg-[#f0f0f0] border-l border-[#f8f8f8] shrink-0" />
        <div className="flex-1 flex flex-col min-w-0">
          <div className="h-[41px] flex items-end bg-[#d0d1d5] text-[20px] leading-[24px] shrink-0">
            <div className="ml-[4px] w-[228px] h-[34px] bg-[#f2f2f4] flex items-center pl-[3px] whitespace-nowrap text-black pt-[4px]">
              <span className="w-[193px]">Plan View [Design]</span>
              <span className="font-['Liberation_Sans',sans-serif] font-bold text-[28px] leading-none -mt-[6px]">X</span>
            </div>
            <div className="w-[210px] h-[34px] flex items-center pl-[2px] whitespace-nowrap text-[#8a8a8a] pt-[4px]">
              <span className="w-[181px]">3D View [Design]</span>
              <span className="font-['Liberation_Sans',sans-serif] font-bold text-[28px] leading-none text-[#6e6e6e] -mt-[6px]">X</span>
            </div>
          </div>
          <div className="flex-1 relative bg-black min-h-0">
            <Drawing />
            <EditPanel />
            <PropsPanel />
          </div>
        </div>
      </div>
    </div>
  );
}
